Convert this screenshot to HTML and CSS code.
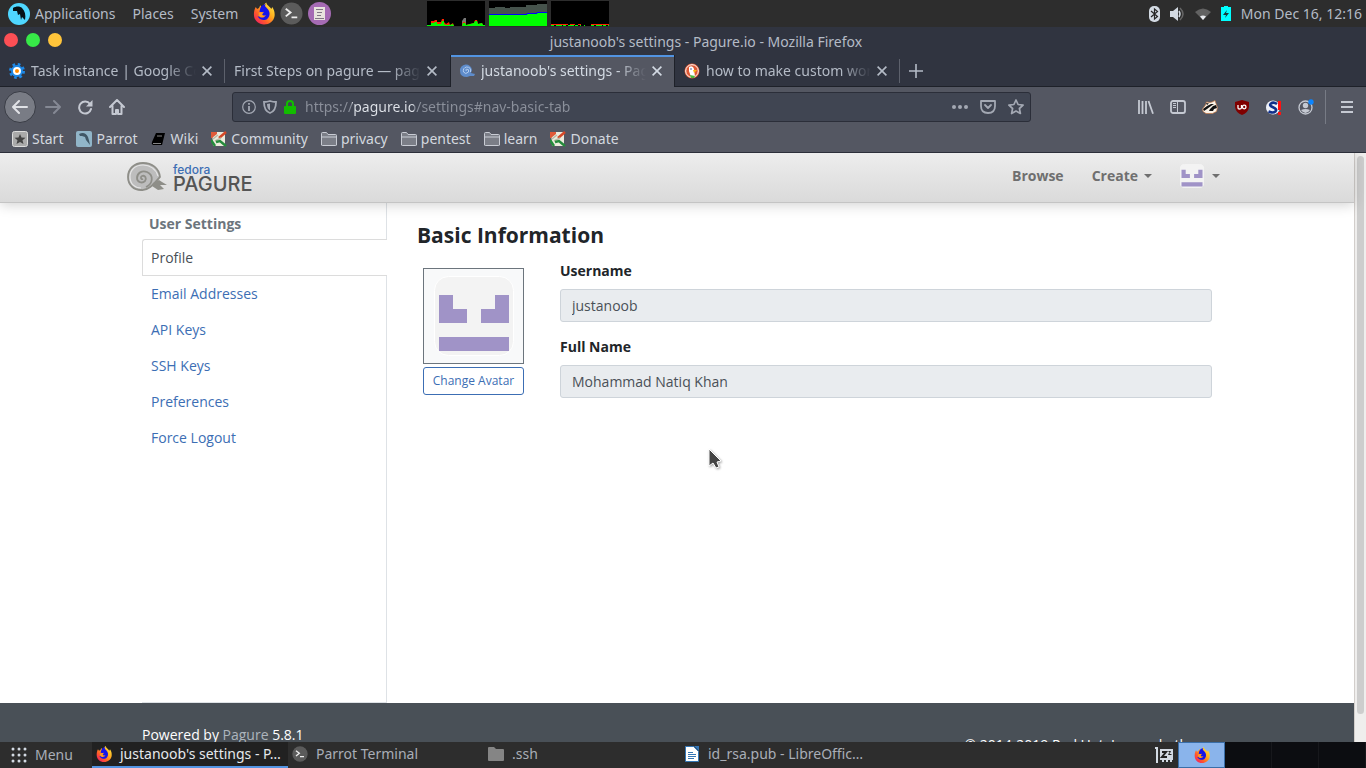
FILE: index.html
```html
<!DOCTYPE html>
<html lang="en">
<head>
<meta charset="utf-8">
<title>justanoob's settings - Pagure.io</title>
<link rel="stylesheet" href="styles.css">
</head>
<body>
<svg class="defs" aria-hidden="true">
  <defs>
    <linearGradient id="flame" x1="1" y1="0" x2="0.1" y2="1"><stop offset="0" stop-color="#fff44f"/><stop offset=".4" stop-color="#ffb01f"/><stop offset=".7" stop-color="#ff5a2a"/><stop offset="1" stop-color="#f0146a"/></linearGradient>
  </defs>
  <symbol id="firefox" viewBox="0 0 24 24">
    <path fill="url(#flame)" d="M3 5 4.500 7.200 6.500 6 8 3l2 3c1-3 3.500-5 4.500-6 .5 3 3 3.500 5.500 7l1-2c2 3 3 6 2.500 10C22.500 20.500 18 24 12 24S1 19.500 1 13c0-3 .8-6 2-8Z"/>
    <path fill="#1414e8" d="M8 6c1-2 3-4 6-4-2 2 0 3 2 5s3 6 1 9-3 3-6 3-5-2-6-4l2 .5-1-3 3 .5 2-2-4-1Z"/>
    <path fill="#ff9b20" d="M7 11c2-1 3 0 5-1l-2 3c1 2 4 1 4 0 0 3-4 4-6 3s-3-3-1-5Z"/>
  </symbol>
  <symbol id="terminal" viewBox="0 0 24 24">
    <circle cx="12" cy="12" r="11.500" fill="#5b5b5b"/>
    <path fill="none" stroke="#eee" stroke-width="2" d="m6 7 5 4-5 4m6 1h6"/>
  </symbol>
  <symbol id="close" viewBox="0 0 10 10"><path fill="none" stroke="currentColor" stroke-width="1.600" d="m.6.600 8.800 8.800m0-8.800L.6 9.400"/></symbol>
  <symbol id="folder" viewBox="0 0 16 14"><path fill="#7b7e87" stroke="#c9ccd4" d="M.5 13V1.500q0-1 1-1h4l1.500 2h7.500q1 0 1 1V13q0 .5-1 .5h-13q-1 0-1-.5ZM.5 5h15"/></symbol>
  <symbol id="note" viewBox="0 0 16 16">
    <path fill="#ecebdc" d="M1 1h13v14H2z"/><path fill="#e05a38" d="M0 1h6v2L1 7H0z"/>
    <path fill="none" stroke="#d54827" stroke-width="2.500" d="m15 1-7 6"/><path stroke="#b9b9a5" stroke-width="1.500" d="m2 8 5-4M4 10l6-3"/>
    <path fill="none" stroke="#258b3c" stroke-width="2.500" d="m5 11 4-1 6 5M0 9l4 6"/>
  </symbol>
  <symbol id="robot" viewBox="0 0 80 80">
    <rect x=".5" y=".5" width="79" height="79" rx="14" fill="#f3f3f3" stroke="#fff"/>
    <path fill="#a093c7" d="M5 19h14v14h14v14H5zM75 19H61v14H47v14h28zM5 61h70v14H5z"/>
  </symbol>
</svg>

<header class="panel">
  <button class="apps"><svg width="22" height="22" viewBox="0 0 22 22"><circle cx="11" cy="11" r="11" fill="#4fd7ff"/><path fill="#061116" d="M5 5c3-2 7-2 9 0 3 3 4 7 3 12l-3-3-1 3-1-6-2 1-1-4-4 0Z"/></svg>Applications</button>
  <button>Places</button>
  <button>System</button>
  <div class="launchers">
    <button aria-label="Firefox"><svg width="22" height="23"><use href="#firefox"/></svg></button>
    <button aria-label="Terminal"><svg width="23" height="23"><use href="#terminal"/></svg></button>
    <button aria-label="Text editor"><svg width="23" height="23" viewBox="0 0 23 23"><circle cx="11.500" cy="11.500" r="11.500" fill="#a56bb4"/><path fill="#e8e4de" d="M6 5h11v13H6z"/><path stroke="#817785" d="M8 7.500h7M9 10.500h5M9 13.500h4M7 16.500h9"/></svg></button>
  </div>
  <div class="monitors">
    <svg width="58" height="25" viewBox="0 0 58 25"><path d="M0 0h58v25H0z"/><path fill="#777" d="M35 25v-5l2-3h2v8z"/><path fill="#f20" d="M1 25v-1h3v-4h3l1-1h2v2h4l1-3h2v3l2 2 3-2 1 3 3-2 1 3h8l1-4h2l1 3 4-1 4-1 1-3h2l1 4 4-1 1 2h3v1z"/><path fill="#0f0" d="M0 25v-1h4v-2h3l1-1h2v2h4l1-3h2v3l2 1h3v-1l1 1 3-1 1 2h8l1-3h2l1 2 4-1 4-1 1-2h2l1 3 4-1 1 2h4v1z"/></svg>
    <svg width="58" height="25" viewBox="0 0 58 25"><path d="M0 0h58v25H0z"/><path fill="#46534c" d="M0 25V7h6V6h10v1h5V6h16V4h11V3h10v22z"/><path fill="#0f0" d="M0 14h38v-1h10v-1h10v13H0z"/><path fill="none" stroke="#00f" d="M0 13.500h38v-1h10v-1h10"/></svg>
    <svg width="58" height="25" viewBox="0 0 58 25"><path d="M0 0h58v25H0z"/><path stroke="#f20" d="M0 23.500h17m2 0h5m3 0h3m10 0h18"/><path stroke="#0f0" stroke-dasharray="3 2 6 1" d="M0 24.500h30m3 0h1m6 0h18"/></svg>
  </div>
  <div class="tray">
    <svg width="11" height="16" viewBox="0 0 11 16"><rect width="11" height="16" rx="5" fill="#d3dae3"/><path fill="none" stroke="#262626" stroke-width="1.200" d="m2 5 6.500 5.500L5.500 13V3l3 2.500L2 11"/></svg>
    <svg width="15" height="14" viewBox="0 0 15 14"><path fill="#d3dae3" d="M0 4h3l5-4v14l-5-4H0z"/><path fill="none" stroke="#d3dae3" stroke-width="1.500" d="M9 4q2 3 0 6"/><path fill="none" stroke="#666" stroke-width="1.500" d="M10 1q6 6 0 12"/></svg>
    <svg width="16" height="12" viewBox="0 0 16 12"><path fill="#626262" d="M0 4q8-7 16 0l-8 8z"/><path fill="#e8eaee" d="M5 8.500q3-2 6 0L8 12z"/></svg>
    <svg width="10" height="15" viewBox="0 0 10 15"><path fill="#0ff" d="M0 1h3V0h4v1h3v14H0z"/><path fill="#18383a" d="M6 4 2 9h3l-1 3 4-5H5z"/></svg>
    <time>Mon Dec 16, 12:16</time>
  </div>
</header>

<div class="titlebar">
  <div class="lights"><button class="red" aria-label="Close"></button><button class="green" aria-label="Maximize"></button><button class="yellow" aria-label="Minimize"></button></div>
  <div class="title">justanoob's settings - Pagure.io - Mozilla Firefox</div>
</div>

<div class="tabs">
  <div class="tab"><svg width="16" height="16" viewBox="0 0 16 16"><circle cx="8" cy="8" r="6" fill="#1e88e5"/><circle cx="8" cy="8" r="6.500" fill="none" stroke="#1e88e5" stroke-width="3" stroke-dasharray="2.550 2.550"/><circle cx="8" cy="8" r="3" fill="#ff8c00" stroke="#fff" stroke-width="2"/></svg><span class="name">Task instance | Google Codelabs</span><button aria-label="Close tab"><svg width="10" height="10"><use href="#close"/></svg></button></div>
  <div class="tab"><span class="name">First Steps on pagure — pagure</span><button aria-label="Close tab"><svg width="10" height="10"><use href="#close"/></svg></button></div>
  <div class="tab active"><svg width="16" height="16" viewBox="0 0 16 16"><path fill="#5e8ccb" d="M1 8a6 6 0 0 1 12-1l-1 3 4 1-1 2-4 0-3 1Q1 14 1 8Z"/><path fill="none" stroke="#b4cdef" d="M7.500 8q-1.500-1 0-2 3 0 2 3-3 3-5 0-1-4 3-5 5 0 4 5"/></svg><span class="name">justanoob's settings - Pagure.io</span><button aria-label="Close tab"><svg width="10" height="10"><use href="#close"/></svg></button></div>
  <div class="tab"><svg width="16" height="16" viewBox="0 0 16 16"><circle cx="8" cy="8" r="7.500" fill="#de5833"/><circle cx="8" cy="8" r="6.300" fill="none" stroke="#fff"/><path fill="#fff" d="M5 4q4-2 5 2l1 8H7L5 8z"/><path fill="#fdb913" d="M9 7h4l-3 3z"/><path fill="#4cba3c" d="m6 12 5 1-1 2H7z"/><circle cx="7" cy="6" r=".8" fill="#2d4f8e"/></svg><span class="name">how to make custom wordlist</span><button aria-label="Close tab"><svg width="10" height="10"><use href="#close"/></svg></button></div>
  <button class="newtab" aria-label="New tab"><svg width="14" height="14" viewBox="0 0 14 14"><path stroke="currentColor" stroke-width="1.600" d="M7 0v14M0 7h14"/></svg></button>
</div>

<div class="toolbar">
  <div class="history">
    <button class="back" aria-label="Back"><svg width="16" height="16" viewBox="0 0 16 16"><path fill="none" stroke="currentColor" stroke-width="2" stroke-linecap="round" stroke-linejoin="round" d="M15 8H1m6-6L1 8l6 6"/></svg></button>
    <button class="forward" aria-label="Forward"><svg width="16" height="16" viewBox="0 0 16 16"><path fill="none" stroke="currentColor" stroke-width="2" stroke-linecap="round" stroke-linejoin="round" d="M1 8h14M9 2l6 6-6 6"/></svg></button>
    <button aria-label="Reload"><svg width="16" height="16" viewBox="0 0 16 16"><path fill="none" stroke="currentColor" stroke-width="2" stroke-linecap="round" d="M13 5a6 6 0 1 0 1 5"/><path fill="currentColor" d="M15.500 1v6.500H9z"/></svg></button>
    <button aria-label="Home"><svg width="16" height="16" viewBox="0 0 16 16"><path fill="none" stroke="currentColor" stroke-width="2" stroke-linecap="round" stroke-linejoin="round" d="m1 8 7-7 7 7M3.500 7v8H7v-4h2v4h3.500V7"/></svg></button>
  </div>
  <div class="urlbar">
    <svg width="14" height="14" viewBox="0 0 14 14"><circle cx="7" cy="7" r="6.300" fill="none" stroke="currentColor" stroke-width="1.200"/><path stroke="currentColor" stroke-width="1.800" d="M7 6v5M7 3v1.800"/></svg>
    <svg width="14" height="14" viewBox="0 0 14 14"><path fill="none" stroke="currentColor" stroke-width="1.800" d="M1 2q3 0 6-1 3 1 6 1 0 9-6 11Q1 11 1 2Z"/><path fill="currentColor" d="M7 3.500v7Q4 9 4 4z"/></svg>
    <svg width="12" height="14" viewBox="0 0 12 14"><rect y="6" width="12" height="8" rx="1" fill="#12bc00"/><path fill="none" stroke="#12bc00" stroke-width="2" d="M3 7V4q0-3 3-3t3 3v3"/></svg>
    <input class="url" type="text" aria-label="Address" value="https://pagure.io/settings#nav-basic-tab">
    <button aria-label="Page actions"><svg width="16" height="4" viewBox="0 0 16 4"><g fill="currentColor"><circle cx="2" cy="2" r="2"/><circle cx="8" cy="2" r="2"/><circle cx="14" cy="2" r="2"/></g></svg></button>
    <button aria-label="Save to Pocket"><svg width="16" height="14" viewBox="0 0 16 14"><path fill="none" stroke="currentColor" stroke-width="1.800" stroke-linecap="round" stroke-linejoin="round" d="M1 1h14v5q0 7-7 7T1 6zm4 4 3 3 3-3"/></svg></button>
    <button aria-label="Bookmark"><svg width="16" height="16" viewBox="0 0 16 16"><path fill="none" stroke="currentColor" stroke-width="1.700" stroke-linejoin="round" d="m8 1 2.100 4.500 5 .6-3.700 3.400 1 5L8 12l-4.400 2.500 1-5L.9 6.100l5-.6z"/></svg></button>
  </div>
  <div class="extensions">
    <button aria-label="Library"><svg width="16" height="14" viewBox="0 0 16 14"><path fill="none" stroke="currentColor" stroke-width="1.800" d="M1 0v14M4.500 1v13M8 1v13M10.500 1l4.500 12.700"/></svg></button>
    <button aria-label="Sidebars"><svg width="16" height="14" viewBox="0 0 16 14"><rect x="1" y="1" width="14" height="12" rx="2" fill="none" stroke="currentColor" stroke-width="1.800"/><path stroke="currentColor" d="M7.500 1v12M3 3.500h3M3 5.500h3M3 7.500h3"/></svg></button>
    <button aria-label="Privacy Badger"><svg width="16" height="14" viewBox="0 0 16 14"><path fill="#fbf3e8" stroke="#c07340" stroke-width=".7" d="m.5 9 3-4 1-3 3 .5L10 2l3-1.500 1 3 1.500 4-1 4-4 2H4l-3-2z"/><path fill="#111" d="m1 9 4-3 4-2 3 0-3 2-4 3-3 2zm7 0 3-3 3-1 1 3-3 1-1 2-4 0zM4 3l3 .5L5 5z"/></svg></button>
    <button aria-label="uBlock Origin"><svg width="14" height="15" viewBox="0 0 14 15"><path fill="#800000" d="m7 0 7 2v5q-1 6-7 8-6-2-7-8V2z"/><path fill="none" stroke="#fff" stroke-width="1.300" d="M3 5v3q0 1 1.500 1T6.500 8V5"/><circle cx="9.200" cy="7" r="1.800" fill="none" stroke="#fff" stroke-width="1.300"/></svg></button>
    <button aria-label="Startpage"><svg width="16" height="15" viewBox="0 0 16 15"><circle cx="7" cy="7.500" r="7" fill="#eef1f8"/><path fill="none" stroke="#10318b" stroke-width="2.600" d="M11 4Q7.500 1.500 5 3.500T7 7.300t2.500 4-7 .2"/><path fill="#f11" d="M12 1h3v9h-3zm0 11h3v3h-3z"/></svg></button>
    <button aria-label="Account"><svg width="16" height="16" viewBox="0 0 16 16"><circle cx="7.500" cy="8.500" r="6.500" fill="none" stroke="currentColor" stroke-width="1.300"/><circle cx="7.500" cy="6.500" r="2.700" fill="currentColor"/><path fill="currentColor" d="M3 11q4.500-2 9 0-2 3-4.500 3T3 11"/><circle cx="13" cy="3" r="2.700" fill="#0a84ff"/></svg></button>
  </div>
  <button class="burger" aria-label="Menu"><svg width="12" height="12" viewBox="0 0 12 12"><path stroke="currentColor" stroke-width="2" d="M0 1h12M0 6h12M0 11h12"/></svg></button>
</div>

<nav class="bookmarks" aria-label="Bookmarks">
  <a href="#"><svg width="16" height="16" viewBox="0 0 16 16"><rect x=".5" y=".5" width="15" height="15" rx="2" fill="#aaa" stroke="#ddd"/><path fill="#444" d="m8 3 1.500 3.500 4 .3-3 2.400 1 3.800L8 11l-3.500 2 1-3.800-3-2.400 4-.3z"/></svg>Start</a>
  <a href="#"><svg width="16" height="16" viewBox="0 0 16 16"><rect width="16" height="16" rx="2" fill="#91b5c8"/><path fill="#405766" d="M3 3q6-3 9 3 1 3 2 8l-4-5-1-3-3-1-2 0z"/></svg>Parrot</a>
  <a href="#"><svg width="16" height="16" viewBox="0 0 16 16"><path d="M5 2h9l-3 12H2q-2-1-1-3z"/><path stroke="#858585" d="M6 5h5M2 12.500h8"/></svg>Wiki</a>
  <a href="#"><svg width="16" height="16"><use href="#note"/></svg>Community</a>
  <a href="#"><svg width="16" height="14"><use href="#folder"/></svg>privacy</a>
  <a href="#"><svg width="16" height="14"><use href="#folder"/></svg>pentest</a>
  <a href="#"><svg width="16" height="14"><use href="#folder"/></svg>learn</a>
  <a href="#"><svg width="16" height="16"><use href="#note"/></svg>Donate</a>
</nav>

<div class="viewport">
  <div class="page">
    <div class="masthead">
      <div class="container">
        <a class="logo" href="#">
          <svg width="40" height="30" viewBox="0 0 40 30"><path fill="#bdbdbd" stroke="#8e8e88" stroke-width="1.800" d="M33 15C32 6 25 1 16 1 7 1 1 7 1 15s6 13 13 13c7 1 12-5 19-13Z"/><path fill="none" stroke="#e6e6e6" stroke-width="1.200" d="M31 14C29 7 23 3 16 3 8 3 3 8 3 15s5 11 11 11"/><path fill="none" stroke="#8e8e88" stroke-width="1.800" d="M16 17c-2 1-3-2-1-3 3-1 5 2 3 5-3 3-8 1-8-3 0-5 5-8 10-6 7 3 6 12-1 15"/><path fill="#8e8e88" d="m26 21 6-3 3 2 5 3-7 0 4 4-6 1-6-4Z"/></svg>
          <span class="wordmark"><span class="fedora">fedora</span><span class="pagure">PAGURE</span></span>
        </a>
        <nav class="usernav">
          <a href="#">Browse</a>
          <button>Create<i class="caret"></i></button>
          <button class="account" aria-label="Account menu"><svg width="24" height="24"><use href="#robot"/></svg><i class="caret"></i></button>
        </nav>
      </div>
    </div>
    <main class="container settings">
      <nav class="side">
        <h2>User Settings</h2>
        <a class="current" href="#">Profile</a>
        <a href="#">Email Addresses</a>
        <a href="#">API Keys</a>
        <a href="#">SSH Keys</a>
        <a href="#">Preferences</a>
        <a href="#">Force Logout</a>
        <div class="rest"></div>
      </nav>
      <section class="basic">
        <h1>Basic Information</h1>
        <div class="profile">
          <div class="avatar">
            <div class="frame"><svg width="80" height="80"><use href="#robot"/></svg></div>
            <button>Change Avatar</button>
          </div>
          <form class="fields">
            <label for="username">Username</label>
            <input id="username" type="text" value="justanoob" readonly>
            <label for="fullname">Full Name</label>
            <input id="fullname" type="text" value="Mohammad Natiq Khan" readonly>
          </form>
        </div>
      </section>
    </main>
    <footer class="foot">
      <div class="container">
        <p>Powered by <a href="#">Pagure</a> 5.8.1</p>
        <p class="copy">© 2014-2019 Red Hat, Inc. and others.</p>
      </div>
    </footer>
  </div>
  <div class="scrollbar"><div class="thumb"></div></div>
  <svg class="cursor" width="14" height="22" viewBox="0 0 14 22"><path fill="#444" stroke="#fff" d="M1 1v17l4-3 3 5 3-1-2-5 4-1z"/></svg>
</div>

<footer class="taskbar">
  <button class="menu"><svg width="16" height="16" viewBox="0 0 16 16"><g fill="#d3dae3"><circle cx="2" cy="2" r="1.500"/><circle cx="8" cy="2" r="1.500"/><circle cx="14" cy="2" r="1.500"/><circle cx="2" cy="8" r="1.500"/><circle cx="8" cy="8" r="1.500"/><circle cx="14" cy="8" r="1.500"/><circle cx="2" cy="14" r="1.500"/><circle cx="8" cy="14" r="1.500"/><circle cx="14" cy="14" r="1.500"/></g></svg>Menu</button>
  <button class="task on"><svg width="16" height="16"><use href="#firefox"/></svg>justanoob's settings - P…</button>
  <button class="task"><svg width="16" height="16"><use href="#terminal"/></svg>Parrot Terminal</button>
  <button class="task"><svg width="16" height="14" viewBox="0 0 16 14"><path fill="#858585" d="M0 1q0-1 1-1h5l2 2h7q1 0 1 1v10q0 1-1 1H1q-1 0-1-1z"/></svg>.ssh</button>
  <button class="task"><svg width="16" height="16" viewBox="0 0 16 16"><path fill="#fff" stroke="#3476b5" d="M1.500.500h8l5 5v10h-13z"/><path fill="#3476b5" d="M10 0h5v5z"/><path stroke="#3476b5" d="M4 6.500h5M4 8.500h8M4 10.500h8M4 12.500h6"/></svg>id_rsa.pub - LibreOffic…</button>
  <div class="right">
    <svg width="18" height="16" viewBox="0 0 18 16"><path fill="#d3dae3" d="M0 0h3v16H1V2H0zM5 2h13v11h-1v2h-2v-2h-2v2h-2v-2H9v2H7v-2H5z"/><path fill="none" stroke="#222" stroke-width="2" d="M7 5h4l-4 5h5"/><path fill="none" stroke="#222" d="M13.500 4.500h2l-2 3h3"/></svg>
    <div class="workspaces"><button class="here" aria-label="Workspace 1"><svg width="16" height="16"><use href="#firefox"/></svg></button><button aria-label="Workspace 2"></button><button aria-label="Workspace 3"></button><button aria-label="Workspace 4"></button></div>
  </div>
</footer>
</body>
</html>
```
FILE: styles.css
```css
* { box-sizing: border-box; }
body {
  margin: 0;
  height: 100vh;
  display: flex;
  flex-direction: column;
  overflow: hidden;
  font: 14px/20px "Noto Sans", sans-serif;
  color: #b4bbc6;
  background: #2d2d2d;
}
button { font: inherit; color: inherit; background: none; border: 0; padding: 0; display: flex; align-items: center; white-space: nowrap; }
a { color: inherit; text-decoration: none; }
svg { display: block; flex: none; }
.defs { position: absolute; width: 0; height: 0; }

.panel { height: 27px; flex: none; display: flex; align-items: center; gap: 17px; padding: 0 4px 0 8px; }
.apps { gap: 5px; }
.launchers { display: flex; gap: 5px; margin-left: -2px; }
.monitors { display: flex; gap: 4px; margin-left: 79px; }
.tray { display: flex; align-items: center; gap: 10px; margin-left: auto; }

.titlebar { height: 28px; flex: none; display: grid; grid-template-columns: 1fr auto 1fr; background: #303440; }
.title { padding: 5px 0 0 46px; }
.lights { display: flex; gap: 8px; padding: 6px 4px; }
.lights button { width: 14px; height: 14px; border-radius: 50%; }
.lights .red { background: #fc4f55; }
.lights .green { background: #37e948; }
.lights .yellow { background: #ffc53b; }

.tabs { height: 32px; flex: none; display: flex; background: #303440; border-bottom: 1px solid #1e2129; }
.tab { width: 225px; display: flex; align-items: center; gap: 6px; padding: 0 13px 0 9px; }
.tab:first-child, .tab:nth-child(4) { background: linear-gradient(#5d616c, #5d616c) right center / 1px 24px no-repeat; }
.tab.active { height: 32px; background: #545762; border: 1px solid #1e2129; border-width: 0 1px; box-shadow: inset 0 2px #5294e2; padding: 0 12px 0 8px; color: #d3dae3; }
.name { flex: 1; min-width: 0; overflow: hidden; white-space: nowrap; mask-image: linear-gradient(90deg, #000 calc(100% - 30px), transparent); }
.newtab { padding: 0 9px; }

.toolbar { height: 40px; flex: none; display: flex; align-items: center; padding: 0 13px 0 4px; background: #545762; color: #c5c9d2; }
.history { display: flex; align-items: center; gap: 16px; width: 228px; }
.back { width: 32px; height: 32px; justify-content: center; background: #797c85; border: 1px solid #393c45; border-radius: 50%; color: #e0e2e6; }
.forward { color: #858994; margin-left: -7px; }
.urlbar { flex: 1; height: 30px; display: flex; align-items: center; gap: 7px; padding: 0 6px 0 9px; background: #404552; border: 1px solid #2b2e39; border-radius: 3px; color: #a3a8b3; }
.urlbar button { margin-left: 5px; }
.url { flex: 1; min-width: 0; font: inherit; border: 0; padding: 0 0 0 2px; outline: 0; color: transparent; background: linear-gradient(90deg, #8b909b 49px, #dfe3e9 49px, #dfe3e9 111px, #8b909b 111px); background-clip: text; }
.extensions { display: flex; gap: 16px; padding: 0 11px 0 107px; }
.extensions button { width: 16px; height: 16px; justify-content: center; }
.burger { height: 34px; padding-left: 15px; border-left: 1px solid #777b85; }

.bookmarks { height: 26px; flex: none; display: flex; align-items: center; gap: 13px; padding: 0 12px 2px; background: #545762; border-bottom: 1px solid #2b2e39; color: #d3d7df; }
.bookmarks a { display: flex; align-items: center; gap: 4px; }

.viewport { flex: 1; min-height: 0; position: relative; display: flex; overflow: hidden; background: #fff; font-family: "Open Sans", sans-serif; color: #212529; }
.page { flex: 1; height: 100%; display: flex; flex-direction: column; }
.container { width: 100%; max-width: 1140px; margin: 0 auto; padding: 0 35px; }
.masthead { position: relative; z-index: 1; height: 50px; flex: none; background: linear-gradient(#ededed, #dadada); border-bottom: 1px solid #c4c4c4; box-shadow: 0 2px 12px rgba(0, 0, 0, .18); }
.masthead .container { height: 100%; display: flex; justify-content: space-between; padding: 0 27px 3px 20px; }
.logo { display: flex; align-items: center; gap: 6px; padding-top: 2px; }
.wordmark { display: flex; flex-direction: column; }
.fedora { font: 500 12px/13px Inter, sans-serif; color: #3c6eb4; }
.pagure { font: 500 20px/16px Inter, sans-serif; color: #555; }
.usernav { display: flex; align-items: center; gap: 28px; font-weight: 700; color: #6f6f6f; }
.account { gap: 2px; }
.caret { margin-left: 6px; border: 4px solid transparent; border-top-color: currentColor; border-bottom: 0; }

.settings { flex: 1; display: flex; }
.side { width: 245px; display: flex; flex-direction: column; }
.side h2 { margin: 0; padding: 11px 7px 5px; font-size: 14px; line-height: 20px; color: #6c757d; border-right: 1px solid #dee2e6; }
.side a { height: 36px; padding: 8px 9px; color: #3c6eb4; border-right: 1px solid #dee2e6; }
.side .current { height: 37px; color: #495057; border: 1px solid #dcdcdc; border-right: 0; border-radius: 3px 0 0 0; padding: 8px; }
.rest { flex: 1; border: solid #dee2e6; border-width: 0 1px 1px 0; }
.basic { flex: 1; padding: 19px 0 0 30px; }
h1 { margin: 0; font-size: 21px; line-height: 26px; }
.profile { display: flex; gap: 36px; padding: 13px 0 0 6px; }
.avatar { width: 101px; padding-top: 7px; }
.frame { height: 96px; display: flex; align-items: center; justify-content: center; background: #f8f9fa; border: 1px solid #6c757d; }
.avatar button { width: 100%; height: 28px; margin-top: 3px; justify-content: center; border: 1px solid #3c6eb4; border-radius: 3px; background: #fff; color: #3c6eb4; font-size: 12px; }
.fields { flex: 1; display: flex; flex-direction: column; }
.fields label { font-weight: 700; margin-bottom: 8px; }
.fields input { height: 33px; margin-bottom: 15px; padding: 0 11px; font: inherit; color: #495057; background: #e9ecef; border: 1px solid #ced4da; border-radius: 3px; outline: 0; }
.foot { height: 39px; flex: none; overflow: hidden; background: #495057; color: #fff; }
.foot .container { display: flex; justify-content: space-between; }
.foot p { margin: 22px 0 0; white-space: nowrap; }
.foot a { color: #adb5bd; }
.foot .copy { margin-top: 32px; }
.scrollbar { width: 12px; padding: 3px 2px 28px; background: #efeeed; border-left: 1px solid #d2cecb; }
.thumb { width: 7px; height: 100%; border-radius: 4px; background: #cdcdcd; }
.cursor { position: absolute; left: 708px; top: 295px; filter: drop-shadow(1px 1px 1px rgba(0, 0, 0, .35)); }

.taskbar { height: 26px; flex: none; display: flex; color: #a9aeb7; background: #2d2d2d; }
.menu { width: 92px; padding-left: 11px; gap: 8px; }
.task { width: 196px; padding-left: 4px; gap: 8px; border-bottom: 2px solid transparent; }
.task.on { background: #212121; border-bottom-color: #5294e2; color: #e5e8ec; }
.right { display: flex; align-items: center; gap: 5px; margin-left: auto; }
.workspaces { height: 100%; display: flex; background: #0c0d11; }
.workspaces button { width: 47px; justify-content: center; border-right: 1px solid #17181c; }
.workspaces .here { background: #8ab4eb; border: 1px solid #3a6ea8; }
```
